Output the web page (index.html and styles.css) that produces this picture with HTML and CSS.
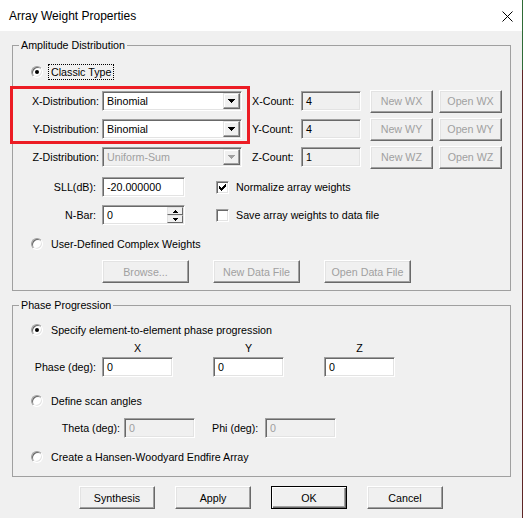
FILE: index.html
```html
<!DOCTYPE html>
<html>
<head>
<meta charset="utf-8">
<title>Array Weight Properties</title>
<link rel="stylesheet" href="styles.css">
</head>
<body>
<div class="window">
  <div class="titlebar">
    <span class="title">Array Weight Properties</span>
    <svg class="close" width="11" height="11" viewBox="0 0 11 11"><path d="M0.5 0.5L10.5 10.5M10.5 0.5L0.5 10.5" stroke="#000" stroke-width="1" fill="none"/></svg>
  </div>
  <div class="client">
    <fieldset class="group g1">
      <legend>Amplitude Distribution</legend>
      <div class="radio-row classic"><span class="radio on"></span><span class="focus">Classic Type</span></div>

      <div class="dist-block">
        <div class="dist-row">
          <span class="lbl-dist">X-Distribution:</span>
          <div class="combo"><span class="combo-text">Binomial</span><span class="combo-btn"><svg width="7" height="4" viewBox="0 0 7 4"><path d="M0 0h7v1h-1v1h-1v1h-1v1h-1v-1h-1v-1h-1v-1h-1z" fill="#000"/></svg></span></div>
          <span class="lbl-count">X-Count:</span>
          <div class="edit ro count">4</div>
          <button class="btn dis w-new">New WX</button>
          <button class="btn dis w-open">Open WX</button>
        </div>
        <div class="dist-row">
          <span class="lbl-dist">Y-Distribution:</span>
          <div class="combo"><span class="combo-text">Binomial</span><span class="combo-btn"><svg width="7" height="4" viewBox="0 0 7 4"><path d="M0 0h7v1h-1v1h-1v1h-1v1h-1v-1h-1v-1h-1v-1h-1z" fill="#000"/></svg></span></div>
          <span class="lbl-count">Y-Count:</span>
          <div class="edit ro count">4</div>
          <button class="btn dis w-new">New WY</button>
          <button class="btn dis w-open">Open WY</button>
        </div>
        <div class="dist-row">
          <span class="lbl-dist">Z-Distribution:</span>
          <div class="combo disabled"><span class="combo-text">Uniform-Sum</span><span class="combo-btn"><svg width="7" height="4" viewBox="0 0 7 4"><path d="M0 0h7v1h-1v1h-1v1h-1v1h-1v-1h-1v-1h-1v-1h-1z" fill="#a0a0a0"/></svg></span></div>
          <span class="lbl-count">Z-Count:</span>
          <div class="edit ro count">1</div>
          <button class="btn dis w-new">New WZ</button>
          <button class="btn dis w-open">Open WZ</button>
        </div>
        <div class="highlight"></div>
      </div>

      <div class="param-block">
        <div class="param-row">
          <span class="lbl-param">SLL(dB):</span>
          <div class="edit sll">-20.000000</div>
          <span class="check on"><svg width="11" height="11" viewBox="0 0 11 11" shape-rendering="crispEdges"><path d="M2 4h1v3h-1zM3 5h1v3h-1zM4 6h1v3h-1zM5 5h1v3h-1zM6 4h1v3h-1zM7 3h1v3h-1zM8 2h1v3h-1z" fill="#000"/></svg></span>
          <span class="check-text">Normalize array weights</span>
        </div>
        <div class="param-row">
          <span class="lbl-param">N-Bar:</span>
          <div class="edit sll spin-edit">
            <span class="spin-text">0</span>
            <span class="spin">
              <span class="spin-btn"><svg width="5" height="3" viewBox="0 0 5 3"><path d="M2 0h1v1h1v1h1v1h-5v-1h1v-1h1z" fill="#000"/></svg></span>
              <span class="spin-btn"><svg width="5" height="3" viewBox="0 0 5 3"><path d="M0 0h5v1h-1v1h-1v1h-1v-1h-1v-1h-1z" fill="#000"/></svg></span>
            </span>
          </div>
          <span class="check"></span>
          <span class="check-text">Save array weights to data file</span>
        </div>
      </div>

      <div class="radio-row user"><span class="radio"></span><span>User-Defined Complex Weights</span></div>

      <div class="file-row">
        <button class="btn dis file">Browse...</button>
        <button class="btn dis file">New Data File</button>
        <button class="btn dis file">Open Data File</button>
      </div>
    </fieldset>

    <fieldset class="group g2">
      <legend>Phase Progression</legend>
      <div class="radio-row"><span class="radio on"></span><span>Specify element-to-element phase progression</span></div>
      <div class="xyz-row">
        <span class="axis">X</span><span class="axis">Y</span><span class="axis">Z</span>
      </div>
      <div class="phase-row">
        <span class="lbl-param">Phase (deg):</span>
        <div class="edit phase">0</div>
        <div class="edit phase">0</div>
        <div class="edit phase">0</div>
      </div>
      <div class="radio-row scan"><span class="radio"></span><span>Define scan angles</span></div>
      <div class="angle-row">
        <span class="lbl-theta">Theta (deg):</span>
        <div class="edit phase disabled">0</div>
        <span class="lbl-phi">Phi (deg):</span>
        <div class="edit phase disabled">0</div>
      </div>
      <div class="radio-row hansen"><span class="radio"></span><span>Create a Hansen-Woodyard Endfire Array</span></div>
    </fieldset>

    <div class="action-row">
      <button class="btn action">Synthesis</button>
      <button class="btn action">Apply</button>
      <button class="btn action default">OK</button>
      <button class="btn action">Cancel</button>
    </div>
  </div>
</div>
</body>
</html>
```
FILE: styles.css
```css
* { box-sizing: border-box; }
html, body { margin: 0; padding: 0; }
body {
  width: 523px;
  height: 518px;
  overflow: hidden;
  background: linear-gradient(#2f6a36 0 70px, #5e2626 70px);
  font-family: "Liberation Sans", Arial, sans-serif;
  font-size: 10.7px;
  color: #000;
}
.window {
  width: 522px;
  height: 518px;
  background: #f0f0f0;
  display: flex;
  flex-direction: column;
}
.titlebar {
  height: 31px;
  flex: none;
  background: #fff;
  display: flex;
  align-items: center;
  padding-left: 9px;
}
.title {
  font-size: 12px;
  color: #000;
}
.close {
  margin-left: auto;
  margin-right: 9px;
  margin-top: 1px;
}
.client {
  flex: 1;
  padding: 8px 11px 0 12px;
}
.group {
  margin: 0;
  min-width: 0;
  border: 1px solid #a0a0a0;
  padding: 10px 0 7px 0;
}
.group legend {
  margin-left: 6px;
  padding: 0 2px;
  line-height: 13px;
  font-size: 10.7px;
}
.g2 {
  margin-top: 8px;
  padding: 8px 0 9px 0;
}
.radio-row {
  height: 20px;
  display: flex;
  align-items: center;
  padding-left: 18px;
}
.radio {
  width: 12px;
  height: 12px;
  flex: none;
  border-radius: 50%;
  border: 1px solid;
  border-color: #a0a0a0 #fff #fff #a0a0a0;
  box-shadow: inset 1px 1px 0 #696969, inset -1px -1px 0 #e3e3e3;
  background: #fff;
  position: relative;
  margin-right: 8px;
}
.radio.on::after {
  content: "";
  position: absolute;
  left: 3px;
  top: 3px;
  width: 4px;
  height: 4px;
  border-radius: 50%;
  background: #000;
}
.classic .radio { margin-right: 5px; }
.focus {
  border: 1px dotted #000;
  padding: 0 2px;
  line-height: 14px;
}
.dist-block {
  margin-top: 5px;
  position: relative;
}
.dist-row {
  height: 28px;
  display: flex;
  align-items: center;
}
.lbl-dist {
  width: 86px;
  text-align: right;
  flex: none;
}
.combo {
  margin-left: 3px;
  width: 140px;
  height: 20px;
  flex: none;
  display: flex;
  align-items: stretch;
  padding: 1px;
  background: #fff;
  border: 1px solid;
  border-color: #a0a0a0 #fff #fff #a0a0a0;
  box-shadow: inset 1px 1px 0 #696969, inset -1px -1px 0 #e3e3e3;
}
.combo.disabled { background: #f0f0f0; color: #a0a0a0; }
.combo-text {
  flex: 1;
  padding-left: 3px;
  line-height: 16px;
}
.combo-btn {
  width: 17px;
  flex: none;
  display: flex;
  align-items: center;
  justify-content: center;
  background: #f0f0f0;
  border: 1px solid;
  border-color: #e3e3e3 #696969 #696969 #e3e3e3;
  box-shadow: inset -1px -1px 0 #a0a0a0, inset 1px 1px 0 #fff;
}
.combo-btn svg { display: block; }
.lbl-count {
  margin-left: 10px;
  width: 49px;
  flex: none;
}
.edit {
  height: 20px;
  flex: none;
  background: #fff;
  border: 1px solid;
  border-color: #a0a0a0 #fff #fff #a0a0a0;
  box-shadow: inset 1px 1px 0 #696969, inset -1px -1px 0 #e3e3e3;
  padding: 1px 1px 1px 4px;
  line-height: 16px;
  white-space: nowrap;
}
.edit.ro { background: #f0f0f0; }
.edit.disabled { background: #f0f0f0; color: #a0a0a0; }
.count { width: 60px; }
.btn {
  font-family: "Liberation Sans", Arial, sans-serif;
  font-size: 10.7px;
  color: #000;
  height: 23px;
  padding: 0;
  flex: none;
  background: #f0f0f0;
  border: 1px solid;
  border-color: #fff #696969 #696969 #fff;
  box-shadow: inset -1px -1px 0 #a0a0a0, inset 1px 1px 0 #e3e3e3;
}
.btn.dis { color: #a0a0a0; }
.w-new { margin-left: 9px; width: 63px; }
.w-open { margin-left: 6px; width: 63px; }
.highlight {
  position: absolute;
  left: -3px;
  top: -1px;
  width: 240px;
  height: 58px;
  border: 3px solid #ec1c24;
}
.param-block { margin-top: 2px; }
.param-row {
  height: 28px;
  display: flex;
  align-items: center;
}
.lbl-param {
  width: 83px;
  text-align: right;
  flex: none;
}
.sll { margin-left: 6px; width: 83px; }
.spin-edit {
  display: flex;
  padding-right: 1px;
}
.spin-text { flex: 1; }
.spin {
  width: 16px;
  display: flex;
  flex-direction: column;
}
.spin-btn {
  height: 8px;
  display: flex;
  align-items: center;
  justify-content: center;
  background: #f0f0f0;
  border: 1px solid;
  border-color: #e3e3e3 #696969 #696969 #e3e3e3;
}
.spin-btn svg { display: block; }
.check {
  margin-left: 31px;
  width: 13px;
  height: 13px;
  flex: none;
  background: #fff;
  border: 1px solid;
  border-color: #a0a0a0 #fff #fff #a0a0a0;
  box-shadow: inset 1px 1px 0 #696969, inset -1px -1px 0 #e3e3e3;
}
.check svg { display: block; }
.check-text { margin-left: 7px; }
.user { margin-top: 5px; }
.file-row {
  margin-top: 6px;
  height: 23px;
  display: flex;
  padding-left: 89px;
  gap: 24px;
}
.file { width: 87px; }
.xyz-row {
  margin-top: 1px;
  height: 14px;
  line-height: 14px;
  display: flex;
  padding-left: 89px;
  gap: 40px;
}
.axis { width: 71px; text-align: center; }
.phase-row {
  margin-top: 2px;
  height: 20px;
  display: flex;
  align-items: center;
}
.phase { width: 71px; }
.phase-row .phase { margin-left: 40px; }
.phase-row .lbl-param + .phase { margin-left: 6px; }
.scan { margin-top: 14px; }
.angle-row {
  margin-top: 7px;
  height: 20px;
  display: flex;
  align-items: center;
}
.lbl-theta { width: 107px; text-align: right; margin-right: 4px; flex: none; }
.lbl-phi { width: 53px; margin-left: 17px; flex: none; }
.hansen { margin-top: 9px; }
.action-row {
  margin-top: 9px;
  display: flex;
  padding-left: 67px;
  gap: 20px;
}
.action { width: 76px; }
.btn.default {
  border-color: #000;
  box-shadow: inset 1px 1px 0 #fff, inset -1px -1px 0 #696969, inset -2px -2px 0 #a0a0a0;
}
```
